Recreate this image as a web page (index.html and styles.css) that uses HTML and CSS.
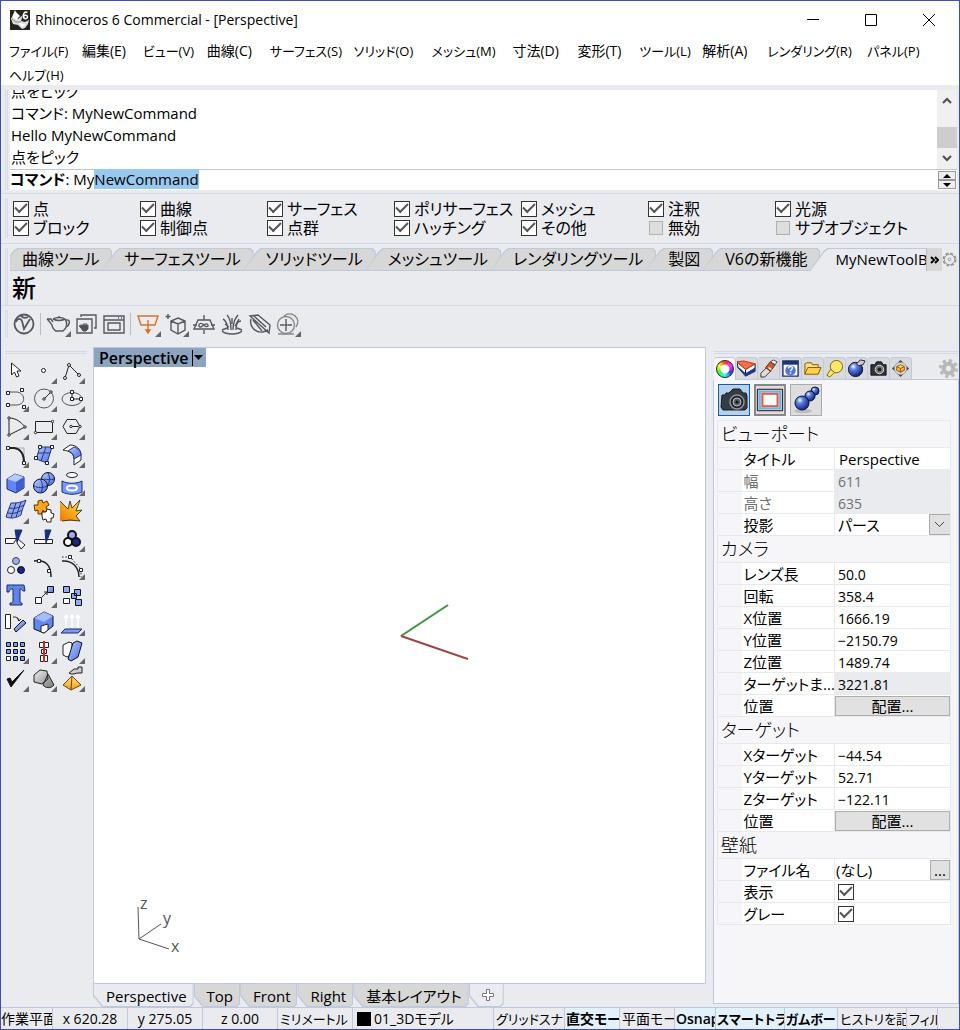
FILE: index.html
```html
<!DOCTYPE html>
<html lang="ja">
<head>
<meta charset="utf-8">
<title>Rhinoceros 6 Commercial - [Perspective]</title>
<meta name="viewport" content="width=device-width, initial-scale=1">
<link rel="stylesheet" href="styles.css">
</head>
<body>
<svg class="defs" aria-hidden="true">
  <defs>
    <linearGradient id="blue" x1="0" y1="0" x2="1" y2="1"><stop offset="0" stop-color="#b4c8ff"/><stop offset="1" stop-color="#4a6fe8"/></linearGradient>
    <radialGradient id="ball" cx=".35" cy=".3" r=".75"><stop offset="0" stop-color="#fff"/><stop offset=".3" stop-color="#5f82ee"/><stop offset="1" stop-color="#0b1c70"/></radialGradient>
    <linearGradient id="gold" x1="0" y1="0" x2="0" y2="1"><stop offset="0" stop-color="#ffe488"/><stop offset="1" stop-color="#f59c12"/></linearGradient>
    <linearGradient id="fire" x1="1" y1="0" x2="0" y2="1"><stop offset="0" stop-color="#ffe13a"/><stop offset="1" stop-color="#f07800"/></linearGradient>
    <linearGradient id="steel" x1="0" y1="0" x2="1" y2="1"><stop offset="0" stop-color="#eee"/><stop offset="1" stop-color="#777"/></linearGradient>
  </defs>
</svg>
<div class="window">
  <header class="titlebar">
    <svg class="app-icon" viewBox="0 0 20 20" aria-hidden="true"><rect width="20" height="20" fill="#222"/><path d="M5 0 1 9l2 5 5 1 4 4 3-1 3-4 1-4-4 2-4-1 2-6-5 4z" fill="#ddd"/><path d="M5 1 3 7l3 3 4-4zM8 12l4 5 4-2" fill="#fff"/><path d="m2 9 4 3 5 0" stroke="#888" fill="none"/><path d="M17.500 2.500C14.500 1 13 4 13.500 7c.5 2.500 4 2 4 0s-3-2.500-4-.5" stroke="#fff" stroke-width="1.500" fill="none"/></svg>
    <h1>Rhinoceros 6 Commercial - [Perspective]</h1>
    <div class="window-buttons">
      <button aria-label="最小化"><svg viewBox="0 0 12 12"><path d="M0 5.500h12"/></svg></button>
      <button aria-label="最大化"><svg viewBox="0 0 12 12"><path d="M.5.5h11v11H.5z"/></svg></button>
      <button aria-label="閉じる"><svg viewBox="0 0 12 12"><path d="m0 0 12 12M12 0 0 12"/></svg></button>
    </div>
  </header>

  <nav class="menu">
    <button class="kana">ファイル(F)</button><button>編集(E)</button><button class="kana">ビュー(V)</button><button>曲線(C)</button><button class="kana">サーフェス(S)</button><button class="kana">ソリッド(O)</button><button class="kana">メッシュ(M)</button><button>寸法(D)</button><button>変形(T)</button><button class="kana">ツール(L)</button><button>解析(A)</button><button class="kana">レンダリング(R)</button><button class="kana">パネル(P)</button><button class="kana">ヘルプ(H)</button>
  </nav>

  <section class="dock command">
    <i class="grip"></i>
    <div class="command-body">
      <div class="history">
        <div class="history-lines">
          <p>点をピック</p><p>コマンド: MyNewCommand</p><p>Hello MyNewCommand</p><p>点をピック</p>
        </div>
        <div class="scrollbar" aria-hidden="true">
          <svg viewBox="0 0 10 7"><path d="m1 6 4-4 4 4"/></svg><i></i><svg viewBox="0 0 10 7"><path d="m1 1 4 4 4-4"/></svg>
        </div>
      </div>
      <div class="prompt">
        <p><b>コマンド</b>: My<mark>NewCommand</mark></p>
        <div class="spinner"><button aria-label="上へ"><svg viewBox="0 0 8 4"><path d="m0 4 4-4 4 4z"/></svg></button><button aria-label="下へ"><svg viewBox="0 0 8 4"><path d="m0 0 4 4 4-4z"/></svg></button></div>
      </div>
    </div>
  </section>

  <section class="dock filters">
    <i class="grip"></i>
    <div class="filter-grid">
      <label><input type="checkbox" checked>点</label><label><input type="checkbox" checked>曲線</label><label><input type="checkbox" checked>サーフェス</label><label><input type="checkbox" checked>ポリサーフェス</label><label><input type="checkbox" checked>メッシュ</label><label><input type="checkbox" checked>注釈</label><label><input type="checkbox" checked>光源</label>
      <label><input type="checkbox" checked>ブロック</label><label><input type="checkbox" checked>制御点</label><label><input type="checkbox" checked>点群</label><label><input type="checkbox" checked>ハッチング</label><label><input type="checkbox" checked>その他</label><label><input type="checkbox" disabled>無効</label><label><input type="checkbox" disabled>サブオブジェクト</label>
    </div>
  </section>

  <section class="dock toolbars">
    <i class="grip"></i>
    <div class="toolbars-body">
      <div class="toolbar-tabs">
        <div class="tab-strip">
          <button><span>曲線ツール</span></button><button><span>サーフェスツール</span></button><button><span>ソリッドツール</span></button><button><span>メッシュツール</span></button><button><span>レンダリングツール</span></button><button><span>製図</span></button><button><span>V6の新機能</span></button><button class="active"><span>MyNewToolBa</span></button>
        </div>
        <button class="overflow" aria-label="その他のタブ"><svg viewBox="0 0 9 8"><path d="m1 1 3 3-3 3M5 1l3 3-3 3"/></svg></button>
        <button class="options" aria-label="オプション"><svg viewBox="0 0 16 16"><circle cx="8" cy="8" r="6.500" stroke-dasharray="3.200 1.900" stroke-width="2"/><circle cx="8" cy="8" r="5.500"/><circle cx="8" cy="8" r="1.500"/></svg></button>
      </div>
      <button class="new-tool">新</button>
    </div>
  </section>

  <section class="dock vray">
    <i class="grip"></i>
    <div class="vray-tools">
      <button aria-label="V-Ray"><svg viewBox="0 0 28 28"><circle cx="14" cy="14" r="9.500" stroke-width="1.800"/><path d="M6 12c1-4 5-4 6-1l2 8 6-10M11 6c2 2 5 2 7 1" stroke-width="1.800"/></svg></button>
      <i class="sep"></i>
      <button class="more" aria-label="レンダー"><svg viewBox="0 0 28 28"><path d="M9 9c3-2 9-2 12 0 3 4 2 9-2 12h-7c-2-1-4-4-4-6C6 13 5 10 3 9h4l2 3M9 9c4 2 8 2 12 0M14 7h2M22 10c5-1 4 5 0 7"/></svg></button>
      <button aria-label="対話レンダー"><svg viewBox="0 0 28 28"><path d="M9 7V5h15v13h-2M5 9h15v14H5z"/><path d="M9 15h7v4l-2 2h-3l-2-3-2-2zM11 14h4" fill="#4c5058" stroke-width="1"/></svg></button>
      <button aria-label="フレームバッファ"><svg viewBox="0 0 28 28"><path d="M4 6h20v17H4zM4 10h20M8 13h12v7H8zM18 8h1m2 0h1"/></svg></button>
      <i class="sep"></i>
      <button class="more orange" aria-label="平面ライト"><svg viewBox="0 0 28 28"><path d="M4 6h20l-3 9H7zM14 10v11"/><path d="m12 20 2 3 2-3z" fill="#cf742e"/></svg></button>
      <button class="more" aria-label="プロキシ"><svg viewBox="0 0 28 28"><path d="m16 8 7 3v9l-7 4-7-4v-9zM9 11l7 3 7-3M16 14v10M6 4v5M3.500 6.500h5"/></svg></button>
      <button aria-label="無限平面"><svg viewBox="0 0 28 28"><path d="M8 10h12l4 9H4zM14 5v5m0 10v4M3 15h4m14 0h4M14 15c-5-5-7 3-3 2 2-1 4-4 6-3 3 2-1 4-3 1"/></svg></button>
      <button aria-label="ファー"><svg viewBox="0 0 28 28"><path d="M10 20C10 14 7 10 5 9M13 20C13 13 12 8 9 5M15 20c0-8 2-11 5-15M18 20c0-6 2-9 5-9M11 17l-4-3M17 16l4-7M14 14V8M4 21c4 4 16 4 20 0M4 20l5-2M24 20l-5-2"/></svg></button>
      <button aria-label="クリッパー"><svg viewBox="0 0 28 28"><path d="m4 6 8-1 12 10-1 8zM8 6l12 11M12 10l6 5M5 9C3 16 9 23 17 22l5-2M7 10l9 11"/></svg></button>
      <button class="more" aria-label="アセット"><svg viewBox="0 0 28 28"><circle cx="12" cy="15" r="8.500" stroke="#888"/><path d="M10 6c7-6 18 2 12 11M4 24h16" stroke="#888"/><path d="M12 9v4m0 4v4M6 15h4m4 0h4"/><circle cx="12" cy="15" r="1" fill="#555"/></svg></button>
    </div>
  </section>

  <main class="workspace">
    <aside class="palette">
      <i class="hgrip"></i>
      <div class="palette-grid">
        <button aria-label="選択"><svg viewBox="0 0 28 28"><path class="w" d="M9.500 6v12l3-3 2 5 2.500-1-2-5h4z"/></svg></button>
        <button class="more" aria-label="点"><svg viewBox="0 0 28 28"><circle class="w" cx="13.500" cy="13.500" r="2"/></svg></button>
        <button class="more" aria-label="ポリライン"><svg viewBox="0 0 28 28"><path d="m7 21 4-13 10 10"/><g class="w"><circle cx="7" cy="21" r="1.500"/><circle cx="11" cy="8" r="1.500"/><circle cx="21" cy="18" r="1.500"/></g></svg></button>

        <button class="more" aria-label="曲線"><svg viewBox="0 0 28 28"><path d="M6 7h8c9 0 11 12 1 13H6" stroke="#555"/><path class="w" d="M4.500 6.500h3v3h-3zM18.500 3.500h3v3h-3zM4.500 18.500h3v3h-3zM20.500 20.500h3v3h-3z"/></svg></button>
        <button class="more" aria-label="円"><svg viewBox="0 0 28 28"><circle cx="14" cy="13.500" r="9.500" stroke="#555"/><path d="m14 14 7-7"/><g class="w"><circle cx="14" cy="14" r="1.200"/><circle cx="21" cy="7" r="1.200"/></g></svg></button>
        <button class="more" aria-label="楕円"><svg viewBox="0 0 28 28"><ellipse cx="14" cy="14" rx="10" ry="6.500" stroke="#555"/><path d="M14 7v7h9"/><path class="w" d="M12.500 5.500h3v3h-3zM12.500 12.500h3v3h-3zM21.500 12.500h3v3h-3z"/></svg></button>

        <button class="more" aria-label="円弧"><svg viewBox="0 0 28 28"><path d="M7 5c7 0 12 4 16 9M7 5v17l16-8"/><g class="w"><circle cx="7" cy="5" r="1.200"/><circle cx="23" cy="14" r="1.200"/><circle cx="7" cy="22" r="1.200"/></g></svg></button>
        <button class="more" aria-label="長方形"><svg viewBox="0 0 28 28"><path d="M5.500 8.500h17v11h-17z"/><g class="w"><circle cx="5.500" cy="19.500" r="1.200"/><circle cx="22.500" cy="8.500" r="1.200"/></g></svg></button>
        <button class="more" aria-label="多角形"><svg viewBox="0 0 28 28"><path d="m9 6.500h9l4 7-4 7H9l-4-7zM13 13.500h9"/><g class="w"><circle cx="13" cy="13.500" r="1.200"/><circle cx="22" cy="13.500" r="1.200"/></g></svg></button>

        <button class="more" aria-label="フィレット"><svg viewBox="0 0 28 28"><path d="M12 7h10v12" stroke="#aaa"/><path d="M6 7h6c8 1 10 7 10 15" stroke-width="2"/><path class="w" d="M4.500 5.500h3v3h-3zM20.500 20.500h3v3h-3z"/></svg></button>
        <button class="more" aria-label="サーフェス"><svg viewBox="0 0 28 28"><path d="M10 6h12l-5 16-11-4z" fill="url(#blue)" stroke="#29377c"/><path d="m16 6-5 14M8 12h12" stroke="#29377c"/><path class="w" d="M8.500 4.500h3v3h-3zM20.500 4.500h3v3h-3zM15.500 20.500h3v3h-3zM4.500 15.500h3v3h-3z"/></svg></button>
        <button class="more" aria-label="曲面"><svg viewBox="0 0 28 28"><path class="w" d="m5 9 7-5c6 0 11 4 11 10v5l-7 5v-6c0-5-4-8-11-9z"/><path d="m10 10 6-4c4 1 7 5 7 8l-7 4c0-4-2-7-6-8z" fill="url(#blue)" stroke="#29377c"/></svg></button>

        <button class="more" aria-label="立方体"><svg viewBox="0 0 28 28"><path d="m5 10 8-5 9 3v11l-8 5-9-4z" fill="#6486f5" stroke="#1d2c70"/><path d="m5 10 8-5 9 3-8 5z" fill="#b9caff" stroke="none"/><path d="m14 13 8-5v11l-8 5z" fill="#3f5fd0" stroke="none"/></svg></button>
        <button class="more" aria-label="ブール演算"><svg viewBox="0 0 28 28"><circle cx="18" cy="10" r="6.500" fill="url(#blue)" stroke="#111"/><circle cx="10.500" cy="17" r="7" fill="url(#blue)" stroke="#111"/><path d="M10 10c3 4 3 9 1 14M4 17c4 2 9 2 13 0M18 4c2 4 2 8 0 12M14 10c3 1 7 1 10 0" stroke="#29377c"/></svg></button>
        <button class="more" aria-label="投影"><svg viewBox="0 0 28 28"><ellipse cx="14" cy="6" rx="5.500" ry="2.500" class="w"/><path d="M4 12c6 3 14 3 20 0v11c-6 3-14 3-20 0z" fill="#7b98f4" stroke="#1d2c70"/><ellipse cx="14" cy="19" rx="5" ry="2.500" fill="#7b98f4" stroke="#fff" stroke-width="2"/></svg></button>

        <button class="more" aria-label="メッシュ"><svg viewBox="0 0 28 28"><path d="M9 6c5 0 9 0 15-3-2 6-4 9-5 15-5 3-9 4-15 2 2-6 3-9 5-14z" fill="#93a9ee" stroke="#25357f"/><path d="M7 11c5 1 10 0 15-3M6 16c5 1 9 0 14-3M14 6l-5 15M19 5l-5 15" stroke="#25357f"/></svg></button>
        <button aria-label="分解"><svg viewBox="0 0 28 28"><path d="m4 8 4 0 0-4 4-1 1 3 4-2 2 4-3 2 2 4-4 1-1-2-1 4-4 0 0-4-3 1z" fill="#ffa51e" stroke="#5a3700"/><path class="w" d="m12 15 4 0 1-3 4 1 0 3 3 1-1 4-2 0 0 4-4 0-1-3-3 1-1-4z"/></svg></button>
        <button aria-label="爆破"><svg viewBox="0 0 28 28"><path d="m2 4 8 8 2-8 2 7 8-8-4 11 6-1-6 6 4 5H2z" fill="url(#fire)" stroke="none"/><path d="m2 4 8 8 2-8 2 7 8-8-4 11 6-1-6 6 4 5-10-1-8 1" stroke-width=".8"/></svg></button>

        <button aria-label="トリム"><svg viewBox="0 0 28 28"><path class="w" d="M3.500 13.500h11l-3 5h-8zM16 14l7 6-4 4-4-6z"/><path d="M13 5h7l-5 12z" fill="#172f7e" stroke="#172f7e"/></svg></button>
        <button aria-label="分割"><svg viewBox="0 0 28 28"><path class="w" d="M4.500 14.500h18v4h-18z"/><path d="M15 5h6l-5 13z" fill="#172f7e" stroke="#172f7e"/></svg></button>
        <button class="more" aria-label="グループ"><svg viewBox="0 0 28 28"><g stroke="#111" stroke-width="2"><circle cx="10" cy="17" r="4" fill="#fff"/><circle cx="18" cy="17" r="4" fill="#1b2587"/><circle cx="14" cy="10" r="4" fill="#9da9f2"/></g></svg></button>

        <button aria-label="グループ解除"><svg viewBox="0 0 28 28"><circle cx="14" cy="8" r="3.500" fill="#9da9f2" stroke="#444"/><circle cx="9" cy="17" r="3.500" class="w"/><circle cx="19" cy="17" r="3.500" fill="#1b2587" stroke="#111"/></svg></button>
        <button aria-label="曲線編集"><svg viewBox="0 0 28 28"><path d="M4 8c14-2 17 7 17 16" stroke-width="1.500"/><path class="w" d="M7.500 6.500h3v3h-3zM17.500 16.500h3v3h-3z"/></svg></button>
        <button class="more" aria-label="制御点"><svg viewBox="0 0 28 28"><path d="M4 8c11-1 17 7 17 16" stroke-width="1.500"/><path d="M4 4h8l11 12v8" stroke-dasharray="1.500 2"/><path class="w" d="M10.500 2.500h3v3h-3zM21.500 15.500h3v3h-3z"/></svg></button>

        <button aria-label="文字"><svg viewBox="0 0 28 28"><path d="M5 4h17l1 6h-2c-1-2-2-2-3-2v12c0 2 1 2 2 2v2H8v-2c2 0 3 0 3-2V8C9 8 8 8 7 11H5z" fill="#5f86e6" stroke="#1b2a66"/></svg></button>
        <button class="more" aria-label="移動"><svg viewBox="0 0 28 28"><path class="w" d="M5.500 16.500h6v6h-6z"/><path d="M17.500 5.500h6v6h-6z" fill="url(#blue)" stroke="#111"/><path d="m12 16 5-5m-3 0h3v3"/></svg></button>
        <button aria-label="コピー"><svg viewBox="0 0 28 28"><path class="w" d="M5.500 17.500h6v5h-6z"/><path d="M5.500 5.500h6v6h-6zM16.500 8.500h6v6h-6zM17.500 18.500h6v6h-6zM13.500 12.500h5v5h-5z" fill="#8fabfa" stroke="#111"/></svg></button>

        <button aria-label="回転"><svg viewBox="0 0 28 28"><path class="w" d="M3.500 5.500h5v14h-5z"/><path d="m12 20 9-9 3 3-10 9z" fill="url(#blue)" stroke="#111"/><path d="M11 8c4 0 6 1 6 4m-2-3 2 3 2-2"/></svg></button>
        <button class="more" aria-label="ソリッド編集"><svg viewBox="0 0 28 28"><path d="m4 9 10-6 9 4v10l-9 7-10-4z" fill="#6486f5" stroke="#111"/><path d="m4 9 10-6 9 4-9 6z" fill="#a5bcff" stroke="none"/><path class="w" d="m11 17 7-2v6l-4 3-3-1z"/></svg></button>
        <button class="more" aria-label="押し出し"><svg viewBox="0 0 28 28"><path d="M8 19V7m6 12V7m6 12V7M6 9l2-3 2 3m2 0 2-3 2 3m2 0 2-3 2 3" stroke="#fff" stroke-width="1.500"/><path d="M7 20h17l-4 4H3z" fill="#7b98f4" stroke="#1d2c70"/></svg></button>

        <button aria-label="配列" class="more"><svg viewBox="0 0 28 28"><path d="M4.500 5.500h4v4h-4zM11.500 5.500h4v4h-4zM18.500 5.500h4v4h-4zM4.500 12.500h4v4h-4zM11.500 12.500h4v4h-4zM18.500 12.500h4v4h-4zM11.500 19.500h4v4h-4zM18.500 19.500h4v4h-4z" fill="#7d9bf6" stroke="#111"/><path class="w" d="M4.500 19.500h4v4h-4z"/></svg></button>
        <button class="more" aria-label="整列"><svg viewBox="0 0 28 28"><path class="w" d="M9.500 5.500h9v5h-9zM11.500 12.500h5v4h-5zM10.500 18.500h7v6h-7z"/><path d="M14 4v21" stroke="#d22" stroke-width="2"/></svg></button>
        <button class="more" aria-label="曲げ"><svg viewBox="0 0 28 28"><path class="w" d="m5 8 6-3 3 1v11l-5 3-4-2z"/><path d="m15 6 4-2 5 2-4 14-7 4-3-2z" fill="url(#blue)" stroke="#111"/></svg></button>

        <button class="more" aria-label="チェック"><svg viewBox="0 0 28 28"><path d="m5 14 4 8L22 5 10 17l-2-4z" fill="#111" stroke="#111"/></svg></button>
        <button class="more" aria-label="レンダー形状"><svg viewBox="0 0 28 28"><path d="m4 10 6-5 7 1 1 8-6 5-8-2zM18 9l6 11c-3 4-9 3-11 0z" fill="url(#steel)" stroke="#222"/></svg></button>
        <button class="more" aria-label="ピラミッド"><svg viewBox="0 0 28 28"><path d="m14 11 9 9-10 5-8-5z" fill="url(#gold)" stroke="#6c4600"/><path d="m14 11-1 14" stroke="#6c4600"/><path d="m11 8 5-4h4v-2h4v6h-5l-3 1-3 0z" fill="#ccc" stroke="#222"/></svg></button>
      </div>
    </aside>

    <section class="viewport-pane">
      <div class="viewport">
        <button class="viewport-title"><span>Perspective</span><svg viewBox="0 0 12 16"><path d="M.5 0v16" stroke="#000"/><path d="M2 5h9l-4.500 5z"/></svg></button>
        <svg class="origin" viewBox="0 0 68 56"><path d="M1 32 48 1" stroke="#3c9440"/><path d="m1 32 67 23" stroke="#9c4444"/></svg>
        <svg class="gizmo" viewBox="0 0 46 60"><path d="m2 10 1 32 22-15M3 42l30 10"/><text x="4" y="12">z</text><text x="27" y="27">y</text><text x="35" y="55">x</text></svg>
      </div>
      <div class="view-tabs">
        <button class="active"><span>Perspective</span></button><button><span>Top</span></button><button><span>Front</span></button><button><span>Right</span></button><button><span>基本レイアウト</span></button><button class="add" aria-label="追加"><svg viewBox="0 0 12 12"><path d="M4.500.5h3v4h4v3h-4v4h-3v-4h-4v-3h4z"/></svg></button>
      </div>
    </section>

    <aside class="panel">
      <i class="hgrip"></i>
      <div class="panel-tabs">
        <button class="active" aria-label="プロパティ"><i class="wheel"></i></button>
        <button aria-label="レイヤ"><svg viewBox="0 0 20 20"><path d="m0 3 9 8v7L1 9zM9 11l10-6v8L9 18z" fill="#fff" stroke="#111"/><path d="m9 15 10-6v4L9 18zM1 8l8 7v3L1 9z" fill="#1b3796"/><path d="m0 3 7-1 12 3-10 6z" fill="#f4704a" stroke="#c33212"/></svg></button>
        <button aria-label="マテリアル"><svg viewBox="0 0 20 20"><path d="m2 15 6-6 4 4-6 6-4 0z" fill="#ddd" stroke="#333"/><path d="m7 9 5-6 5 3-5 7z" fill="#dd5530" stroke="#5b2410"/><path d="m12 3 3-2 4 2-2 3z" fill="#f4efe9" stroke="#444"/><path d="m10 9 3 2" stroke="#f4d8c6" stroke-width="2"/></svg></button>
        <button aria-label="ヘルプ"><svg viewBox="0 0 20 20"><path d="M2 2h16v16H2z" fill="#fff" stroke="#1f3270" stroke-width="1.500"/><path d="M2 2h16v4H2z" fill="#1f3270"/><circle cx="10" cy="12" r="5.500" fill="#4f74e0"/><path d="M8 10c0-3 4-3 4-.5 0 1.500-2 1.500-2 3.500m0 1v1.500" stroke="#fff" stroke-width="1.500" fill="none"/></svg></button>
        <button aria-label="ライブラリ"><svg viewBox="0 0 20 20"><path d="M2 16V5l2-1h5l1 2h6v3" fill="#ffe07a" stroke="#7b5900"/><path d="m5 9h14l-3 7H2z" fill="#ffd34f" stroke="#7b5900"/></svg></button>
        <button aria-label="ライト"><svg viewBox="0 0 20 20"><circle cx="12" cy="8" r="6.500" fill="#ffe66a" stroke="#7b6300"/><path d="m6 11 4 3-5 5-3-2z" fill="#ffe66a" stroke="#7b6300"/></svg></button>
        <button aria-label="環境"><svg viewBox="0 0 20 20"><circle cx="9" cy="11" r="7.500" fill="url(#ball)" stroke="#111"/><path d="m10 5 4-4 5 1-2 4-5 1z" fill="#ccc" stroke="#222"/></svg></button>
        <button aria-label="カメラ"><svg viewBox="0 0 20 20"><path d="M2 6h4l2-3h5l2 3h3v11H2z" fill="#303338" stroke="#111"/><circle cx="11" cy="11" r="4.500" fill="#777" stroke="#ddd"/><circle cx="11" cy="11" r="2" fill="#222"/></svg></button>
        <button aria-label="太陽"><svg viewBox="0 0 20 20"><path d="m10 1 3 3H7zm0 18 3-3H7zM1 10l3-3v6zm18 0-3-3v6z" fill="#444"/><circle cx="10" cy="10" r="6.500" fill="none" stroke="#999"/><path d="m6 8 4-2 4 2v4l-4 2-4-2z" fill="url(#gold)" stroke="#8a5c00"/><path d="m6 8 4 2 4-2m-4 2v4" stroke="#8a5c00" fill="none"/></svg></button>
        <button class="panel-gear" aria-label="設定"><svg viewBox="0 0 18 18"><circle cx="9" cy="9" r="4.500" fill="none" stroke="#b8b8ba" stroke-width="4"/><circle cx="9" cy="9" r="7.500" fill="none" stroke="#b8b8ba" stroke-width="3" stroke-dasharray="3 2.900"/></svg></button>
      </div>
      <div class="panel-body">
        <div class="modes">
          <button class="on" aria-label="カメラ"><svg viewBox="0 0 30 30"><path d="M3 10h3l1-2h3l4-4h7l3 4h3l1 3v12l-2 2H4l-2-3z" fill="#343c44" stroke="#181c20"/><circle cx="18" cy="17" r="7" fill="#222" stroke="#8994a0" stroke-width="1.500"/><circle cx="18" cy="17" r="4" fill="#56616c" stroke="#bbb"/><circle cx="18" cy="17" r="1.500" fill="#111"/></svg></button>
          <button class="frame" aria-label="フレーム"><svg viewBox="0 0 30 30"><path d="M1.500 3.500h27v23h-27z" fill="#ccc" stroke="#111"/><path d="M4 6h22v18H4z" fill="none" stroke="#62b6ed" stroke-width="2"/><path d="M7 8.500h16v13H7z" fill="#fff" stroke="#ee5146" stroke-width="2"/></svg></button>
          <button aria-label="リンク"><svg viewBox="0 0 30 30"><ellipse cx="12" cy="26" rx="9" ry="2" fill="#bbb"/><g stroke="#0b1440"><circle cx="24" cy="6" r="4" fill="url(#ball)"/><circle cx="19" cy="11" r="5" fill="url(#ball)"/><circle cx="11" cy="18" r="7" fill="url(#ball)"/></g></svg></button>
        </div>
        <table class="props">
          <colgroup><col class="c-gutter"><col class="c-name"><col></colgroup>
          <tbody>
            <tr class="group"><th colspan="3">ビューポート</th></tr>
            <tr><td></td><th><label for="p1">タイトル</label></th><td><input class="title-value" id="p1" value="Perspective"></td></tr>
            <tr class="off"><td></td><th><label for="p2">幅</label></th><td><input id="p2" value="611" disabled></td></tr>
            <tr class="off"><td></td><th><label for="p3">高さ</label></th><td><input id="p3" value="635" disabled></td></tr>
            <tr><td></td><th><label for="p4">投影</label></th><td><select id="p4"><option>パース</option></select></td></tr>
          </tbody>
          <tbody>
            <tr class="group"><th colspan="3">カメラ</th></tr>
            <tr><td></td><th><label for="c1">レンズ長</label></th><td><input id="c1" value="50.0"></td></tr>
            <tr><td></td><th><label for="c2">回転</label></th><td><input id="c2" value="358.4"></td></tr>
            <tr><td></td><th><label for="c3">X位置</label></th><td><input id="c3" value="1666.19"></td></tr>
            <tr><td></td><th><label for="c4">Y位置</label></th><td><input id="c4" value="−2150.79"></td></tr>
            <tr><td></td><th><label for="c5">Z位置</label></th><td><input id="c5" value="1489.74"></td></tr>
            <tr class="locked"><td></td><th><label for="c6">ターゲットま...</label></th><td><input id="c6" value="3221.81" readonly></td></tr>
            <tr><td></td><th>位置</th><td><button>配置...</button></td></tr>
          </tbody>
          <tbody>
            <tr class="group"><th colspan="3">ターゲット</th></tr>
            <tr><td></td><th><label for="t1">Xターゲット</label></th><td><input id="t1" value="−44.54"></td></tr>
            <tr><td></td><th><label for="t2">Yターゲット</label></th><td><input id="t2" value="52.71"></td></tr>
            <tr><td></td><th><label for="t3">Zターゲット</label></th><td><input id="t3" value="−122.11"></td></tr>
            <tr><td></td><th>位置</th><td><button>配置...</button></td></tr>
          </tbody>
          <tbody>
            <tr class="group"><th colspan="3">壁紙</th></tr>
            <tr><td></td><th>ファイル名</th><td><div class="file"><span>(なし)</span><button>...</button></div></td></tr>
            <tr><td></td><th><label for="w1">表示</label></th><td><input id="w1" type="checkbox" checked></td></tr>
            <tr><td></td><th><label for="w2">グレー</label></th><td><input id="w2" type="checkbox" checked></td></tr>
          </tbody>
        </table>
      </div>
    </aside>
  </main>

  <footer class="status">
    <button class="flush">作業平面</button><span>x 620.28</span><span>y 275.05</span><span>z 0.00</span><button class="kana">ミリメートル</button><button class="layer"><i></i>01_3Dモデル</button>
    <button class="kana">グリッドスナ</button><button class="on">直交モー</button><button>平面モー</button><button class="on">Osnap</button><button class="on kana">スマートトラ</button><button class="on kana">ガムボー</button><button class="kana">ヒストリを記</button><button class="kana">フィル</button>
  </footer>
</div>
</body>
</html>
```

FILE: styles.css
```css
:root {
  --face: #eaebef;
  --line: #c0c8dc;
  --soft: #d4d9e6;
  --tab: #d7d7d7;
  --ui: "Open Sans", "Noto Sans CJK JP", sans-serif;
}

* { box-sizing: border-box; }

body {
  margin: 0;
  font: 400 15px/22px var(--ui);
  font-feature-settings: "palt";
  color: #000;
  background: var(--face);
}

h1, p { margin: 0; }

button, input, select {
  margin: 0;
  padding: 0;
  border: 0;
  border-radius: 0;
  background: none;
  font: inherit;
  font-feature-settings: inherit;
  color: inherit;
  white-space: nowrap;
}

svg { display: block; }
.defs { position: absolute; width: 0; height: 0; }

.window {
  display: flex;
  flex-direction: column;
  min-height: 100vh;
  border: 1px solid #3a50b4;
}

/* Title bar and menu */
.titlebar {
  display: flex;
  align-items: center;
  height: 38px;
  padding: 0 1px 0 9px;
  background: #fff;
}
.app-icon { width: 20px; height: 20px; }
.titlebar h1 { flex: 1; margin-left: 5px; font: 400 14px/22px var(--ui); }
.window-buttons { display: flex; }
.window-buttons button { width: 58px; height: 36px; display: grid; place-items: center; }
.window-buttons svg { width: 12px; height: 12px; fill: none; stroke: #000; }

.menu {
  display: grid;
  grid-template-columns: 73fr 61fr 64fr 63fr 84fr 78fr 81fr 65fr 62fr 63fr 65fr 100fr 92fr;
  grid-template-rows: 24px 22px;
  padding-left: 8px;
  background: #fff;
  font-size: 14px;
  line-height: 24px;
}
.menu button { text-align: left; }
.menu .kana { font-size: 13px; }

/* Docked bars */
.dock { display: flex; border-bottom: 1px solid var(--soft); padding-right: 2px; }
.grip {
  flex: none;
  width: 3px;
  margin: 0 3px 0 4px;
  border: solid var(--soft);
  border-width: 0 1px;
}

.command { padding-top: 5px; padding-bottom: 3px; }
.command-body { flex: 1; margin-left: -1px; background: #fff; }
.history { display: flex; height: 79px; }
.history-lines { flex: 1; overflow: hidden; display: flex; flex-direction: column; justify-content: flex-end; padding: 0 0 1px 1px; font-weight: 300; }
.history-lines p { flex: none; line-height: 22px; }
.scrollbar {
  width: 20px;
  background: #f0f0f0;
  display: flex;
  flex-direction: column;
  align-items: center;
  padding: 7px 0;
}
.scrollbar i { width: 20px; height: 21px; margin: auto 0 7px; background: #cdcdcd; }
.scrollbar svg { width: 10px; height: 7px; fill: none; stroke: #505050; stroke-width: 2; }
.history-lines, .prompt { font-weight: 400; }
.prompt { display: flex; justify-content: space-between; border-top: 1px solid #c0c8d4; height: 21px; }
.prompt p { line-height: 19px; }
.prompt b { font-weight: 600; }
.prompt mark { background: #99c9ef; color: inherit; }
.spinner { display: flex; flex-direction: column; padding: 1px; }
.spinner button { width: 18px; height: 9px; border: 1px solid #999; background: #eee; display: grid; place-items: center; }
.spinner svg { width: 8px; height: 4px; }

.filters { padding-top: 4px; padding-bottom: 5px; }
.filter-grid {
  flex: 1;
  display: grid;
  grid-template-columns: repeat(7, minmax(0, 127fr)) 55fr;
  grid-auto-rows: 19px;
  padding: 1px 0 1px 2px;
}
.filter-grid label { display: flex; align-items: center; gap: 4px; white-space: nowrap; font-size: 16px; }
.filter-grid label:nth-child(8) { grid-column: 1; }

input[type="checkbox"] {
  appearance: none;
  flex: none;
  width: 16px;
  height: 16px;
  border: 1px solid #333;
  background: #fff;
  display: grid;
  place-items: center;
}
input[type="checkbox"]:checked::before {
  content: "";
  width: 10px;
  height: 5px;
  margin-top: -4px;
  border: solid #555;
  border-width: 0 0 2px 2px;
  transform: rotate(-45deg);
}
input[type="checkbox"]:disabled { width: 14px; height: 14px; margin: 1px; border-color: #b0b0b0; background: #ddd; }

.toolbars { padding-top: 4px; }
.toolbars-body { flex: 1; min-width: 0; margin-left: -1px; }
.toolbar-tabs { display: flex; align-items: stretch; height: 23px; }
.tab-strip { flex: 1; display: flex; overflow: hidden; font-size: 16px; }
.tab-strip button {
  flex: none;
  height: 23px;
  margin-left: -11px;
  background: var(--line);
  clip-path: polygon(0 100%, 14px 3px, 18px 0, calc(100% - 3px) 0, 100% 3px, 100% 100%);
}
.tab-strip span {
  display: block;
  height: 21px;
  margin: 1px;
  padding: 0 12px 0 22px;
  line-height: 20px;
  background: var(--tab);
  clip-path: polygon(0 100%, 14px 3px, 18px 0, calc(100% - 3px) 0, 100% 3px, 100% 100%);
}
.tab-strip .active span { height: 22px; padding-left: 25px; background: var(--face); font-size: 15px; }
.overflow { width: 16px; background: var(--tab); display: grid; place-items: center; border-left: 1px solid #bbb; }
.overflow svg { width: 9px; height: 8px; fill: none; stroke: #000; stroke-width: 2; }
.options { width: 15px; display: grid; place-items: center; }
.options svg { width: 15px; height: 15px; fill: none; stroke: #999; }
.new-tool { display: block; height: 34px; padding: 0 2px; font-size: 24px; font-weight: 500; line-height: 30px; }

.vray { padding: 4px 0 9px; border: 0; }
.vray-tools { display: flex; margin-left: -1px; }
.vray-tools button { position: relative; width: 28px; height: 28px; }
.vray-tools svg { width: 28px; height: 28px; fill: none; stroke: #55585e; stroke-width: 1.400; }
.vray-tools .orange svg { stroke: #cf742e; }
.vray-tools i { width: 1px; margin: 3px 3px 3px 2px; background: #bbb; }

.more::after {
  content: "";
  position: absolute;
  right: 1px;
  bottom: 1px;
  border: 3px solid transparent;
  border-right-color: #666;
  border-bottom-color: #666;
}

/* Workspace */
.workspace { flex: 1; display: flex; }
.hgrip { display: block; height: 3px; border: solid var(--soft); border-width: 1px 0; }

.palette { flex: none; width: 92px; padding: 4px 6px 0 1px; }
.palette .hgrip { margin: 0 0 3px 3px; }
.palette-grid { display: grid; grid-template-columns: repeat(3, 28px); }
.palette button { position: relative; width: 28px; height: 28px; }
.palette svg { width: 28px; height: 28px; fill: none; stroke: #222; }
.palette .w { fill: #fff; stroke: #222; }

.viewport-pane { flex: 1; min-width: 0; display: flex; flex-direction: column; }
.viewport { position: relative; flex: 1; border: 1px solid var(--line); background: #fff; }
.viewport-title {
  display: flex;
  align-items: center;
  height: 19px;
  padding: 0 2px 0 5px;
  background: #8ca4c0;
  font-size: 16px;
  font-weight: 600;
  line-height: 16px;
}
.viewport-title svg { width: 12px; height: 16px; margin-left: 4px; }
.origin { position: absolute; left: 50%; top: 256px; width: 68px; height: 56px; fill: none; stroke-width: 2; }
.gizmo { position: absolute; left: 42px; bottom: 26px; width: 46px; height: 60px; overflow: visible; fill: none; stroke: #555; }
.gizmo text { fill: #555; stroke: none; font: 400 16px "Open Sans", sans-serif; }

.view-tabs { display: flex; height: 23px; }
.view-tabs button {
  background: var(--line);
  clip-path: polygon(0 0, 100% 0, 100% calc(100% - 3px), calc(100% - 3px) 100%, 9px 100%, 0 calc(100% - 11px));
}
.view-tabs span, .view-tabs .add svg {
  display: block;
  height: 22px;
  margin: 0 1px 1px;
  padding: 0 6px 0 12px;
  line-height: 24px;
  background: var(--tab);
  clip-path: polygon(0 0, 100% 0, 100% calc(100% - 3px), calc(100% - 3px) 100%, 9px 100%, 0 calc(100% - 11px));
}
.view-tabs .active span { background: var(--face); }
.view-tabs .add svg { width: 33px; padding: 5px 9px 5px 12px; background: var(--face); fill: #fff; stroke: #777; }

/* Right panel */
.panel { flex: none; width: 253px; padding: 4px 0 3px 7px; display: flex; flex-direction: column; }
.panel .hgrip { margin: 0 1px 3px; }
.panel-tabs { display: flex; height: 23px; border-bottom: 1px solid var(--line); margin-left: 1px; }
.panel-tabs button {
  width: 22px;
  height: 22px;
  border: 1px solid var(--line);
  border-width: 1px 1px 0 0;
  border-radius: 3px 4px 0 0;
  background: #d9dade;
  display: grid;
  place-items: center;
}
.panel-tabs button.active { background: #f6f6f8; height: 23px; }
.panel-tabs svg { width: 19px; height: 19px; }
.wheel {
  width: 18px;
  height: 18px;
  border: 1px solid #222;
  border-radius: 50%;
  background: radial-gradient(circle, #fff 4px, transparent 5px), conic-gradient(#f33, #f3f, #33f, #3ff, #3f3, #ff3, #f33);
}
.panel-tabs .panel-gear { margin-left: auto; border: 0; background: none; }
.panel-body { flex: 1; border: 1px solid var(--line); border-top: 0; background: #f6f6f8; padding: 4px 7px 4px 3px; }
.modes { display: flex; gap: 4px; padding-left: 1px; }
.modes button { width: 32px; height: 32px; border: 1px solid #aaa; background: #ddd; }
.modes .on { background: #b8d2ec; border-color: #1a5a9e; }
.modes .frame { border: 2px solid #888; }
.modes svg { width: 30px; height: 30px; margin: auto; }
.modes .frame svg { width: 28px; height: 28px; }

.props { width: 100%; margin-top: 4px; border-collapse: collapse; table-layout: fixed; border: 1px solid #e6e7eb; }
.c-gutter { width: 24px; }
.c-name { width: 93px; }
.props tr { height: 22px; }
.props td, .props th {
  height: 22px;
  padding: 0;
  border: 1px solid #e8e9ed;
  background: #fff;
  text-align: left;
  font-weight: 400;
  line-height: 20px;
  white-space: nowrap;
}
.props td:first-child { background: #f6f6f8; border-right: 0; }
.props th { padding-left: 2px; border-left: 0; font-size: 15px; overflow: hidden; }
.props .group th { height: 27px; padding-left: 3px; background: #f6f6f8; font-size: 18px; font-weight: 300; line-height: 24px; }
.props input { display: block; width: 100%; height: 21px; padding: 1px 0 0 3px; font-size: 14px; }
.props .title-value { padding-left: 4px; font-size: 15px; }
.props input[type="checkbox"] { display: grid; width: 16px; height: 16px; margin-left: 3px; padding: 0; }
.props .off { color: #707070; }
.props .off td:last-child, .props .locked td:last-child { background: var(--face); }
.props select {
  appearance: none;
  display: block;
  width: 100%;
  height: 21px;
  padding-left: 3px;
  font-size: 15px;
  background: url("data:image/svg+xml,%3Csvg xmlns='http://www.w3.org/2000/svg' width='21' height='21'%3E%3Cpath d='M.5.5h21v20H.5z' fill='%23e0e0e0' stroke='%23aaa'/%3E%3Cpath d='m6 8 4.500 4.500L15 8' fill='none' stroke='%23444'/%3E%3C/svg%3E") no-repeat right;
}
.props button { display: block; width: 100%; height: 20px; border: 1px solid #adadad; background: #e1e1e1; font-size: 15px; line-height: 18px; }
.file { display: flex; justify-content: space-between; padding-left: 1px; font-size: 15px; }
.props .file button { width: 20px; }

/* Status bar */
.status {
  display: grid;
  grid-template-columns: 52px 75px 75px 75px 75px minmax(90px, 1fr) 71px 55px 55px 41px 69px 53px 69px 31px;
  height: 22px;
  padding-right: 21px;
  border-top: 1px solid var(--line);
  font-size: 14px;
}
.status > * { overflow: hidden; white-space: nowrap; text-align: center; border-right: 1px solid var(--line); height: 21px; line-height: 22px; }
.status button { text-align: left; padding-left: 2px; }
.status .kana { font-size: 13px; }
.status button.flush { padding-left: 0; }
.status .layer { display: flex; align-items: center; gap: 3px; padding-left: 4px; }
.status .layer i { width: 14px; height: 14px; background: #000; }
.status .on { padding-left: 1px; background: #e2f1fb; font-weight: 600; }
```
